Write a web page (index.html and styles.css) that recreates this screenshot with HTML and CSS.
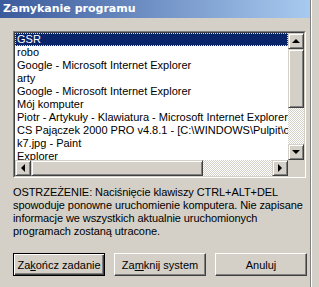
FILE: index.html
```html
<!DOCTYPE html>
<html lang="pl">
<head>
    <meta charset="UTF-8">
    <title>Zamykanie programu</title>
    <link rel="stylesheet" href="styles.css">
</head>
<body>
    <div class="window">
        <div class="titlebar">Zamykanie programu</div>
        <div class="content">
            <div class="listbox">
                <div class="listbox-inner">
                    <ul class="items">
                        <li class="selected"><span>GSR</span></li>
                        <li>robo</li>
                        <li>Google - Microsoft Internet Explorer</li>
                        <li>arty</li>
                        <li>Google - Microsoft Internet Explorer</li>
                        <li>Mój komputer</li>
                        <li>Piotr - Artykuły - Klawiatura - Microsoft Internet Explorer</li>
                        <li>CS Pajączek 2000 PRO v4.8.1 - [C:\WINDOWS\Pulpit\ostatni.htm]</li>
                        <li>k7.jpg - Paint</li>
                        <li>Explorer</li>
                    </ul>
                    <div class="vscroll">
                        <div class="sbtn"><i class="arrow up"></i></div>
                        <div class="thumb vthumb"></div>
                        <div class="track"></div>
                        <div class="sbtn"><i class="arrow down"></i></div>
                    </div>
                    <div class="hscroll">
                        <div class="sbtn"><i class="arrow left"></i></div>
                        <div class="thumb hthumb"></div>
                        <div class="track"></div>
                        <div class="sbtn"><i class="arrow right"></i></div>
                    </div>
                    <div class="corner"></div>
                </div>
            </div>
            <p class="warning">OSTRZEŻENIE: Naciśnięcie klawiszy CTRL+ALT+DEL spowoduje ponowne uruchomienie komputera. Nie zapisane informacje we wszystkich aktualnie uruchomionych programach zostaną utracone.</p>
            <div class="buttons">
                <button class="btn default">Za<u>k</u>ończ zadanie</button>
                <button class="btn">Za<u>m</u>knij system</button>
                <button class="btn">Anuluj</button>
            </div>
        </div>
    </div>
</body>
</html>
```

FILE: styles.css
```css
*{
    margin: 0;
    padding: 0;
    box-sizing: border-box;
}
body{
    background-color: #d4d0c8;
    font-family: "Liberation Sans", Arial, sans-serif;
    font-size: 11px;
    color: #000;
}
.window{
    width: 311px;
    height: 287px;
    border-right: 1px solid #808080;
    box-shadow: 1px 0 0 #fff;
}
.titlebar{
    height: 18px;
    padding-left: 3px;
    line-height: 18px;
    font-family: "DejaVu Sans", Verdana, sans-serif;
    font-weight: bold;
    font-size: 11px;
    color: #fff;
    background: linear-gradient(to right, #3a5a9c, #a8caef);
}
.content{
    padding: 13px 0 0 13px;
}
.listbox{
    width: 293px;
    height: 147px;
    border: 1px solid;
    border-color: #808080 #fff #fff #808080;
}
.listbox-inner{
    height: 100%;
    border: 1px solid;
    border-color: #404040 #d4d0c8 #d4d0c8 #404040;
    background-color: #fff;
    display: grid;
    grid-template-columns: 1fr 16px;
    grid-template-rows: 1fr 16px;
}
.items{
    list-style: none;
    overflow: hidden;
}
.items li{
    height: 13px;
    line-height: 13px;
    padding-left: 2px;
    white-space: nowrap;
    overflow: hidden;
}
.items li.selected{
    background-color: #0a246a;
    color: #fff;
    outline: 1px dotted #e8e0a0;
    outline-offset: -1px;
}
.vscroll{
    display: flex;
    flex-direction: column;
}
.hscroll{
    display: flex;
}
.sbtn, .thumb, .corner{
    background-color: #d4d0c8;
}
.sbtn, .thumb{
    border: 1px solid;
    border-color: #d4d0c8 #404040 #404040 #d4d0c8;
    box-shadow: inset 1px 1px #fff, inset -1px -1px #808080;
}
.sbtn{
    width: 16px;
    height: 16px;
    flex: none;
    display: flex;
    align-items: center;
    justify-content: center;
}
.vthumb{
    height: 59px;
    flex: none;
}
.hthumb{
    width: 172px;
    flex: none;
}
.track{
    flex: 1;
    background: repeating-conic-gradient(#fff 0 25%, #d4d0c8 0 50%) 0 0/2px 2px;
}
.arrow{
    width: 0;
    height: 0;
    border: 4px solid transparent;
}
.arrow.up{
    border-bottom-color: #000;
    border-top-width: 0;
}
.arrow.down{
    border-top-color: #000;
    border-bottom-width: 0;
}
.arrow.left{
    border-right-color: #000;
    border-left-width: 0;
}
.arrow.right{
    border-left-color: #000;
    border-right-width: 0;
}
.warning{
    width: 296px;
    margin-top: 8px;
    line-height: 13px;
    letter-spacing: -0.08px;
}
.buttons{
    display: flex;
    gap: 9px;
    margin-top: 15px;
}
.btn{
    width: 92px;
    height: 23px;
    font-family: "Liberation Sans", Arial, sans-serif;
    font-size: 11px;
    color: #000;
    background-color: #d4d0c8;
    border: 1px solid;
    border-color: #fff #404040 #404040 #fff;
    box-shadow: inset -1px -1px #808080;
}
.btn.default{
    border: 1px solid #000;
    box-shadow: inset 1px 1px #fff, inset -1px -1px #404040, inset -2px -2px #808080;
}
```
